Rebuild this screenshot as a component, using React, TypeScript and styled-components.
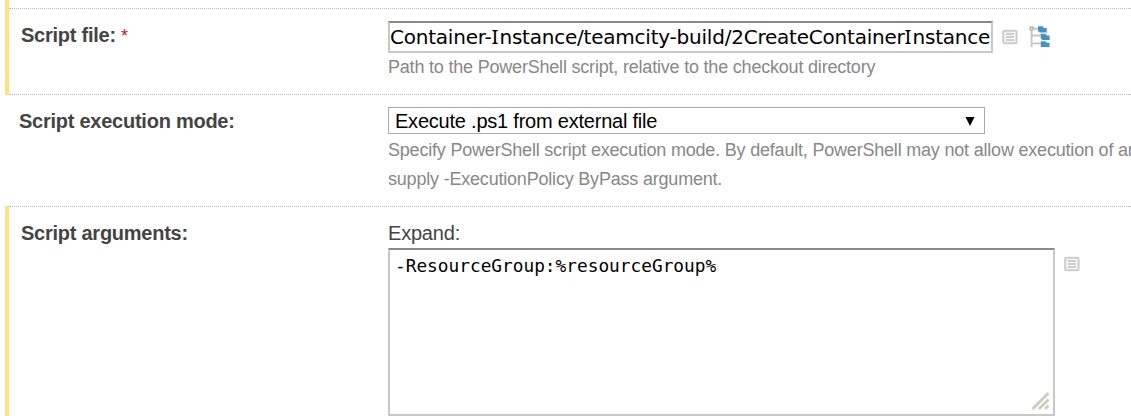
import React from "react";
import styled, { createGlobalStyle } from "styled-components";

const GlobalStyle = createGlobalStyle`
  * { box-sizing: border-box; }
  body { margin: 0; background: #fff; overflow: hidden; }
`;

const Page = styled.main`
  width: 1131px;
  height: 416px;
  overflow: hidden;
  padding-left: 5px;
  font-family: "Liberation Sans", Arial, sans-serif;
  color: #444;
`;

const Row = styled.section<{ $height: number; $changed?: boolean }>`
  display: flex;
  height: ${(p) => p.$height}px;
  border-left: 4px solid ${(p) => (p.$changed ? "#ffe082" : "transparent")};
`;

const RowBody = styled.div<{ $last?: boolean; $first?: boolean }>`
  display: flex;
  flex: 1;
  min-width: 0;
  border-top: ${(p) => (p.$first ? "1px dotted #bbb" : "none")};
  border-bottom: ${(p) => (p.$last ? "none" : "1px dotted #bbb")};
`;

const Label = styled.div<{ $indent: number }>`
  flex: 0 0 379px;
  padding: 14px 0 0 ${(p) => p.$indent}px;
  font-size: 20px;
  line-height: 24px;
  font-weight: bold;
  letter-spacing: -0.25px;
`;

const Required = styled.span`
  color: #d01010;
  font-size: 18px;
  font-weight: normal;
`;

const Field = styled.div<{ $top: number }>`
  flex: 1;
  min-width: 0;
  padding-top: ${(p) => p.$top}px;
  white-space: nowrap;
`;

const Line = styled.div`
  display: flex;
  align-items: flex-start;
`;

const TextInput = styled.div`
  width: 605px;
  height: 32px;
  border: 2px solid #c8c8c8;
  border-top-color: #888;
  overflow: hidden;
  color: #000;
  font-family: "DejaVu Sans", Verdana, sans-serif;
  font-size: 20px;
  line-height: 28px;
  letter-spacing: -0.22px;
`;

const SerifCapital = styled.span`
  font-family: "Noto Sans", sans-serif;
  font-size: 20.5px;
  line-height: 1;
  letter-spacing: 1px;
`;

const Hint = styled.div<{ $gap?: number }>`
  margin-top: ${(p) => p.$gap ?? 0}px;
  color: #888;
  font-size: 18px;
  line-height: 29px;
  letter-spacing: -0.2px;
`;

const Select = styled.div`
  display: flex;
  justify-content: space-between;
  align-items: center;
  width: 597px;
  height: 27px;
  padding: 1px 9px 0 6px;
  border: 1px solid #a9a9a9;
  color: #000;
  font-size: 20px;
  line-height: 24px;
  letter-spacing: -0.22px;
`;

const Expand = styled.div`
  font-size: 20px;
  line-height: 24px;
  margin-bottom: 3px;
  letter-spacing: -0.2px;
`;

const TextArea = styled.div`
  display: flex;
  justify-content: space-between;
  width: 667px;
  height: 168px;
  padding: 4px 4px 4px 5px;
  border: 2px solid #c8c8c8;
  border-top-color: #888;
  color: #000;
  font-family: "DejaVu Sans Mono", monospace;
  font-size: 17.8px;
  line-height: 24px;
`;

const IconSlot = styled.span<{ $left: number; $top: number }>`
  display: flex;
  margin: ${(p) => p.$top}px 0 0 ${(p) => p.$left}px;
`;

const Grip = styled.svg`
  align-self: flex-end;
`;

const ListIcon = () => (
  <svg width="16" height="16" viewBox="0 0 16 16">
    <rect x="1.2" y="1.8" width="13.4" height="12.4" rx="1.2" fill="#f4f4f4" stroke="#cdcdcd" strokeWidth="2" />
    <path d="M4 5h8M4 8h8M4 11h8" stroke="#c2c2c2" strokeWidth="1.4" />
  </svg>
);

const TreeIcon = () => (
  <svg width="21" height="22" viewBox="0 0 21 22">
    <path d="M2.6 4v17M5 2.8h4M3 9.5h9M3 17.4h9" stroke="#c6c6c6" strokeWidth="1.9" fill="none" />
    <circle cx="2.6" cy="2.6" r="1.7" fill="#e8e8e8" stroke="#b8b8b8" strokeWidth="1.6" />
    <path d="M9 .3h4.6l1.3 1.6h2.8v4.7H10.6L9 5zM11.8 7.8h4.6l1.3 1.6h2.9v4.6h-7.2l-1.6-1.6zM11.8 15.2h4.6l1.3 1.6h2.9v4.3h-8.8z" fill="#4592c6" />
  </svg>
);

export default function App() {
  return (
    <>
      <GlobalStyle />
      <Page>
        <Row $height={8} $changed />
        <Row $height={87} $changed>
          <RowBody $first>
            <Label $indent={12}>
              Script file: <Required>*</Required>
            </Label>
            <Field $top={12}>
              <Line>
                <TextInput>
                  Container-<SerifCapital>I</SerifCapital>nstance/teamcity-build/2CreateContainer<SerifCapital>I</SerifCapital>nstance
                </TextInput>
                <IconSlot $left={9} $top={8}><ListIcon /></IconSlot>
                <IconSlot $left={11} $top={5}><TreeIcon /></IconSlot>
              </Line>
              <Hint>Path to the PowerShell script, relative to the checkout directory</Hint>
            </Field>
          </RowBody>
        </Row>
        <Row $height={111}>
          <RowBody $last>
            <Label $indent={10}>Script execution mode:</Label>
            <Field $top={12}>
              <Select>
                <span>Execute .ps1 from external file</span>
                <svg width="10" height="9" viewBox="0 0 10 9">
                  <path d="M.5 0h9L5 9z" fill="#000" />
                </svg>
              </Select>
              <Hint $gap={2}>
                Specify PowerShell script execution mode. By default, PowerShell may not allow execution of any
                <br />
                supply -ExecutionPolicy ByPass argument.
              </Hint>
            </Field>
          </RowBody>
        </Row>
        <Row $height={210} $changed>
          <RowBody $first $last>
            <Label $indent={12}>Script arguments:</Label>
            <Field $top={14}>
              <Expand>Expand:</Expand>
              <Line>
                <TextArea>
                  <span>-ResourceGroup:%resourceGroup%</span>
                  <Grip width="18" height="18" viewBox="0 0 18 18">
                    <path d="M1.5 17L17.5 1M8 17L17.5 7.5M14 17l3.5-3.5" stroke="#cbcdbd" strokeWidth="2.8" />
                  </Grip>
                </TextArea>
                <IconSlot $left={9} $top={8}><ListIcon /></IconSlot>
              </Line>
            </Field>
          </RowBody>
        </Row>
      </Page>
    </>
  );
}
